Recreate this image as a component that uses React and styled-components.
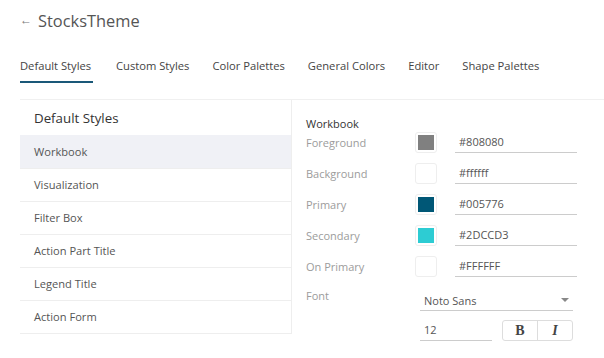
import React from "react";
import styled, { createGlobalStyle } from "styled-components";

const Global = createGlobalStyle`
  html, body { margin: 0; padding: 0; background: #fff; }
  body { font-family: "Open Sans", "Noto Sans", sans-serif; color: #444; }
  * { box-sizing: border-box; }
`;

const Page = styled.div`
  width: 604px;
  height: 358px;
  overflow: hidden;
  padding: 8px 0 0 20px;
`;

const TitleRow = styled.div`
  display: flex;
  align-items: center;
  height: 24px;
  gap: 6px;
`;

const Back = styled.span`
  font-size: 12px;
  color: #777;
  line-height: 1;
`;

const Title = styled.h1`
  margin: 0;
  font-size: 16.4px;
  font-weight: 400;
  color: #555;
`;

const Tabs = styled.div`
  display: flex;
  gap: 23px;
  margin-top: 25px;
  border-bottom: 1px solid #f0f0f0;
  padding-bottom: 16px;
`;

const Tab = styled.div`
  font-size: 11.2px;
  line-height: 17px;
  color: #444;
  padding-bottom: 7px;
  min-width: ${(p) => (p.$active ? "73px" : "0")};
  border-bottom: 2px solid ${(p) => (p.$active ? "#1a5878" : "transparent")};
`;

const Main = styled.div`
  display: flex;
  align-items: flex-start;
`;

const Sidebar = styled.div`
  width: 272px;
  border-right: 1px solid #eee;
  border-bottom: 1px solid #eee;
`;

const SideHeader = styled.div`
  height: 35px;
  display: flex;
  align-items: center;
  padding-left: 14px;
  font-size: 13.3px;
  color: #333;
`;

const SideItem = styled.div`
  height: 33px;
  display: flex;
  align-items: center;
  padding-left: 14px;
  padding-bottom: 1px;
  font-size: 11.1px;
  color: #555;
  background: ${(p) => (p.$active ? "#f0f1f6" : "#fff")};
  border-top: ${(p) => (p.$first ? "none" : "1px solid #eee")};
`;

const Panel = styled.div`
  flex: 1;
  padding: 16px 0 0 14px;
`;

const PanelTitle = styled.div`
  font-size: 11px;
  line-height: 16px;
  color: #333;
`;

const ColorRow = styled.div`
  display: flex;
  align-items: center;
  height: 31px;
  padding-bottom: 10px;
`;

const Label = styled.div`
  width: ${(p) => p.$w || 109}px;
  font-size: 11px;
  color: #9c9c9c;
  line-height: 18px;
`;

const Swatch = styled.div`
  width: 22px;
  height: 21px;
  border: 1px solid #eee;
  border-radius: 3px;
  padding: 2px;
  margin-right: 18px;
  &::after {
    content: "";
    display: block;
    width: 100%;
    height: 100%;
    background: ${(p) => p.$color};
  }
`;

const HexInput = styled.div`
  width: 122px;
  height: 21px;
  border-bottom: 1px solid #ccc;
  padding-left: 4px;
  font-size: 11px;
  line-height: 20px;
  color: #555;
`;

const FontRow = styled.div`
  display: flex;
  align-items: flex-start;
`;

const FontControls = styled.div`
  display: flex;
  flex-direction: column;
  gap: 9px;
  padding-top: 3px;
`;

const Select = styled.div`
  width: 153px;
  height: 21px;
  border-bottom: 1px solid #ccc;
  display: flex;
  align-items: center;
  justify-content: space-between;
  padding: 0 4px;
  font-size: 11px;
  color: #555;
`;

const Caret = styled.span`
  width: 0;
  height: 0;
  border-left: 4px solid transparent;
  border-right: 4px solid transparent;
  border-top: 4px solid #888;
`;

const SizeRow = styled.div`
  display: flex;
  gap: 10px;
`;

const SizeInput = styled.div`
  width: 72px;
  height: 21px;
  border-bottom: 1px solid #ccc;
  padding-left: 4px;
  font-size: 11px;
  line-height: 20px;
  color: #555;
`;

const BtnGroup = styled.div`
  display: flex;
  width: 71px;
  height: 21px;
  border: 1px solid #ddd;
  border-radius: 3px;
  overflow: hidden;
`;

const StyleBtn = styled.div`
  flex: 1;
  display: flex;
  align-items: center;
  justify-content: center;
  font-family: "Liberation Serif", "DejaVu Serif", serif;
  font-weight: 700;
  font-size: 14px;
  font-style: ${(p) => (p.$italic ? "italic" : "normal")};
  color: #444;
  & + & { border-left: 1px solid #ddd; }
`;

const tabs = ["Default Styles", "Custom Styles", "Color Palettes", "General Colors", "Editor", "Shape Palettes"];
const items = ["Workbook", "Visualization", "Filter Box", "Action Part Title", "Legend Title", "Action Form"];
const colors = [
  ["Foreground", "#808080", "#808080"],
  ["Background", "#ffffff", "#ffffff"],
  ["Primary", "#005776", "#005776"],
  ["Secondary", "#2DCCD3", "#2DCCD3"],
  ["On Primary", "#FFFFFF", "#FFFFFF"],
];

export default function App() {
  return (
    <>
      <Global />
      <Page>
        <TitleRow>
          <Back>←</Back>
          <Title>StocksTheme</Title>
        </TitleRow>
        <Tabs>
          {tabs.map((t, i) => (
            <Tab key={t} $active={i === 0}>{t}</Tab>
          ))}
        </Tabs>
        <Main>
          <Sidebar>
            <SideHeader>Default Styles</SideHeader>
            {items.map((t, i) => (
              <SideItem key={t} $active={i === 0} $first={i === 0}>{t}</SideItem>
            ))}
          </Sidebar>
          <Panel>
            <PanelTitle>Workbook</PanelTitle>
            {colors.map(([l, c, v]) => (
              <ColorRow key={l}>
                <Label>{l}</Label>
                <Swatch $color={c} />
                <HexInput>{v}</HexInput>
              </ColorRow>
            ))}
            <FontRow>
              <Label $w={114}>Font</Label>
              <FontControls>
                <Select>
                  Noto Sans
                  <Caret />
                </Select>
                <SizeRow>
                  <SizeInput>12</SizeInput>
                  <BtnGroup>
                    <StyleBtn>B</StyleBtn>
                    <StyleBtn $italic>I</StyleBtn>
                  </BtnGroup>
                </SizeRow>
              </FontControls>
            </FontRow>
          </Panel>
        </Main>
      </Page>
    </>
  );
}
